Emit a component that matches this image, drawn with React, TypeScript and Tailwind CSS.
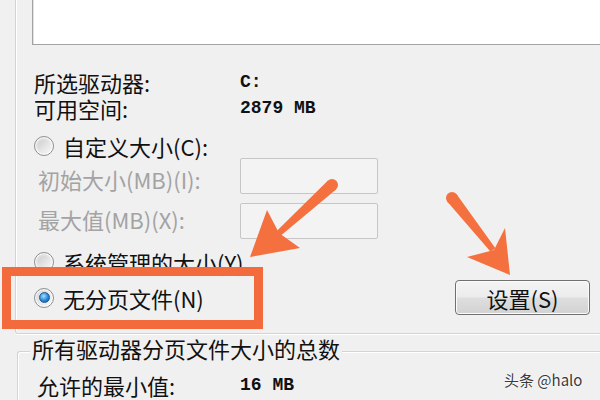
import React from "react";

function Radio({ checked }: { checked?: boolean }) {
  return (
    <div className="w-[20px] h-[20px] rounded-full border border-[#8e8f8f] bg-[linear-gradient(135deg,#d6d6d6,#f8f8f8)] flex items-center justify-center shadow-[inset_0_0_0_1px_#fff]">
      {checked ? (
        <div className="w-[11px] h-[11px] rounded-full bg-[radial-gradient(circle_at_40%_35%,#9fe0ff,#2a86d6_55%,#0d4d8f)] border border-[#1c5a96]" />
      ) : (
        <div className="w-[12px] h-[12px] rounded-full bg-[linear-gradient(135deg,#cfcfcf,#f4f4f4)]" />
      )}
    </div>
  );
}

export default function App() {
  return (
    <div className="relative w-[600px] h-[400px] overflow-hidden bg-[#f0f0f0] text-[22px] text-[#111] font-['Noto_Sans_CJK_SC','Liberation_Sans',sans-serif]">
      {/* top group */}
      <div className="ml-[15px] h-[334px] border-l border-b border-[#d3d3d3] rounded-bl-[3px] shadow-[inset_1px_0_0_#ffffff,0_1px_0_#ffffff]">
        <div className="pl-[16px] flex flex-col">
          <div className="h-[45px] bg-white border-l border-b border-[#a2a2a2] shadow-[inset_1px_0_0_#e2e2e2]" />
          <div className="mt-[24px] h-[26px] pl-[2px] flex items-center">
            <span className="w-[206px] leading-none">所选驱动器:</span>
            <span className="leading-none font-['Liberation_Mono',monospace] font-bold text-[18px]">C:</span>
          </div>
          <div className="h-[26px] pl-[2px] flex items-center">
            <span className="w-[206px] leading-none">可用空间:</span>
            <span className="leading-none font-['Liberation_Mono',monospace] font-bold text-[18px]">2879 MB</span>
          </div>
          <div className="mt-[13px] h-[24px] pl-[2px] flex items-center gap-[9px]">
            <Radio />
            <span className="leading-none">自定义大小(C):</span>
          </div>
          <div className="h-[36px] pl-[6px] flex items-center">
            <span className="w-[202px] leading-none text-[#a3a3a3] mt-[6px]">初始大小(MB)(I):</span>
            <div className="w-[138px] h-full rounded-[2px] border border-[#c6c6c6] bg-[#f3f3f3]" />
          </div>
          <div className="mt-[9px] h-[36px] pl-[6px] flex items-center">
            <span className="w-[202px] leading-none text-[#a3a3a3] -mt-[4px]">最大值(MB)(X):</span>
            <div className="w-[138px] h-full rounded-[2px] border border-[#c6c6c6] bg-[#f3f3f3]" />
          </div>
          <div className="mt-[10px] h-[26px] pl-[2px] flex items-center gap-[9px]">
            <Radio />
            <span className="leading-none">系统管理的大小(Y)</span>
          </div>
          <div className="mt-[5px] h-[35px] pl-[2px] pr-[10px] flex items-center justify-between">
            <div className="flex items-center gap-[9px]">
              <Radio checked />
              <span className="leading-none">无分页文件(N)</span>
            </div>
            <div className="w-[135px] h-[35px] rounded-[4px] border border-[#707070] bg-[linear-gradient(180deg,#f4f4f4_0%,#ececec_48%,#dedede_52%,#d2d2d2_100%)] shadow-[inset_0_0_0_1px_#fbfbfb] flex items-center justify-center">
              <span className="leading-none">设置(S)</span>
            </div>
          </div>
        </div>
      </div>

      {/* bottom group */}
      <div className="pl-[17px]">
        <div className="h-[28px] flex items-center">
          <div className="w-[13px] h-[11px] self-end border-l border-t border-[#d3d3d3] rounded-tl-[3px] shadow-[inset_1px_1px_0_#fff]" />
          <span className="px-[2px] leading-none">所有驱动器分页文件大小的总数</span>
          <div className="flex-1 h-[11px] self-end border-t border-[#d3d3d3] shadow-[inset_0_1px_0_#fff]" />
        </div>
        <div className="h-[40px] border-l border-[#d3d3d3] shadow-[inset_1px_0_0_#fff] pl-[19px] pt-[10px]">
          <div className="h-[26px] flex items-center">
            <span className="w-[203px] leading-none">允许的最小值:</span>
            <span className="leading-none font-['Liberation_Mono',monospace] font-bold text-[18px]">16 MB</span>
          </div>
        </div>
      </div>

      {/* red highlight box */}
      <div className="absolute left-[2px] top-[267px] w-[261px] h-[62px] border-[9px] border-[#f36a3c]" />

      {/* arrows */}
      <svg className="absolute left-0 top-0" width="600" height="400" viewBox="0 0 600 400">
        <g fill="#f4703f">
          <circle cx="332" cy="185" r="6" />
          <polygon points="328,180.6 336,189.4 280,236.2 276,231.8" />
          <polygon points="250,257 267,210 279,233 300,248" />
          <circle cx="452" cy="198" r="6" />
          <polygon points="447.2,201.6 456.8,194.4 495.4,248.2 490.6,251.8" />
          <polygon points="510,275 505,228 494,250 467,257" />
        </g>
      </svg>

      {/* watermark */}
      <div className="absolute left-[504px] top-[369px] text-[15px] leading-[22px] text-[#3a3a3a] [text-shadow:0_0_2px_#fff,0_0_2px_#fff] font-['Noto_Sans_CJK_SC','Liberation_Sans',sans-serif]">
        头条 @halo
      </div>
    </div>
  );
}
